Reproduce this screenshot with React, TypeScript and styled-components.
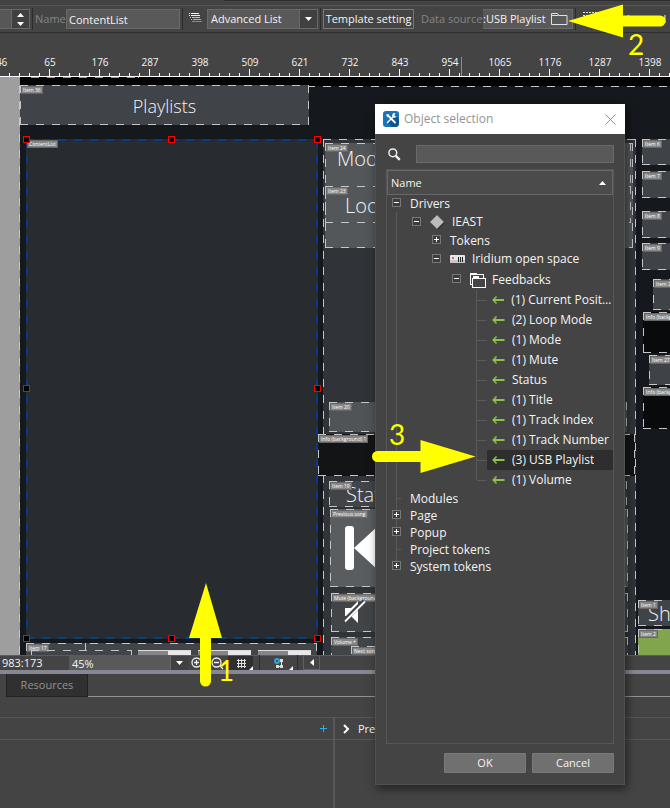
import React from 'react';
import styled, { createGlobalStyle, css } from 'styled-components';

const GlobalStyle = createGlobalStyle`
  * { box-sizing: border-box; }
  html, body { margin: 0; background: #444; }
  body, button, input, select {
    font-family: 'Open Sans', 'Noto Sans', sans-serif;
    font-size: 11px;
    line-height: 16px;
    color: #f4f4f4;
  }
  button, input, select { margin: 0; padding: 0; border: 0; border-radius: 0; outline: 0; background: none; }
  ul { list-style: none; margin: 0; padding: 0; }
`;

const Screen = styled.div`
  position: relative;
  display: flex;
  flex-direction: column;
  min-height: 100vh;
  overflow: hidden;
  background: #444;
`;

/* ---------- toolbar ---------- */

const TopEdge = styled.div`
  height: 5px;
  background: linear-gradient(#2c2c2c, #2c2c2c) 224px 0 / 100% 1px no-repeat #434343;
`;

const Toolbar = styled.header`
  display: flex;
  align-items: center;
  height: 28px;
  border-top: 1px solid #555;
  border-bottom: 1px solid #2e2e2e;
  white-space: nowrap;
  overflow: hidden;
`;

const Divider = styled.span`
  flex: none;
  width: 1px;
  height: 22px;
  margin: 0 2px;
  background: #2c2c2c;
`;

const Spinner = styled.div`
  flex: none;
  display: flex;
  width: 30px;
  height: 20px;
  border: 1px solid #696969;
  border-left: 0;
  background: #575757;
`;

const SpinButtons = styled.div`
  display: flex;
  flex-direction: column;
  margin-left: auto;
  width: 18px;
  background: #404040;
  border-left: 1px solid #696969;
`;

const SpinButton = styled.button`
  flex: 1;
  display: flex;
  align-items: center;
  justify-content: center;
`;

const FieldLabel = styled.label<{ $w: number }>`
  flex: none;
  width: ${p => p.$w}px;
  color: #858585;
`;

const Field = styled.input`
  flex: none;
  height: 20px;
  width: 114px;
  padding: 0 2px;
  border: 1px solid #696969;
  background: #595959;
`;

const Combo = styled.div<{ $width: number; $flat?: boolean }>`
  flex: none;
  position: relative;
  display: flex;
  width: ${p => p.$width}px;
  height: ${p => (p.$flat ? 14 : 20)}px;
  border: ${p => (p.$flat ? 0 : '1px solid #696969')};
  background: #595959;
`;

const ComboSelect = styled.select`
  appearance: none;
  flex: 1;
  min-width: 0;
  padding-left: 3px;
`;

const ComboArrow = styled.span`
  display: flex;
  align-items: center;
  justify-content: center;
  width: 18px;
  border-left: 1px solid #696969;
  background: #404040;
  pointer-events: none;
`;

const OutlineButton = styled.button`
  flex: none;
  height: 20px;
  width: 91px;
  border: 1px solid #777;
`;

const SourceField = styled.div`
  flex: none;
  display: flex;
  align-items: center;
  width: 90px;
  height: 20px;
  border: 1px solid #696969;
  border-left: 0;
  background: #595959;
`;

const SourceInput = styled.input`
  flex: 1;
  min-width: 0;
`;

const IconButton = styled.button<{ $w: number }>`
  flex: none;
  display: flex;
  align-items: center;
  justify-content: center;
  width: ${p => p.$w}px;
  height: 100%;
`;

const ToolGap = styled.span<{ $w: number }>`
  flex: none;
  width: ${p => p.$w}px;
`;

/* ---------- ruler ---------- */

const Ruler = styled.div`
  position: relative;
  flex: none;
  display: flex;
  height: 44px;
  overflow: hidden;
  border-bottom: 1px solid #fff;
  background: linear-gradient(90deg, #fff 1px, transparent 1px) 9px 100% / 10px 3px repeat-x;
`;

const RulerCell = styled.div<{ $first?: boolean }>`
  flex: none;
  width: 50px;
  height: 43px;
  padding-top: 21px;
  margin-left: ${p => (p.$first ? '-25px' : '0')};
  text-align: center;
  font-size: 10px;
  background: linear-gradient(#fff, #fff) 24px 100% / 1px 7px no-repeat;
`;

const RulerCursor = styled.span`
  position: absolute;
  left: 461px;
  bottom: 0;
  width: 1px;
  height: 19px;
  background: #00f000;
`;

/* ---------- canvas ---------- */

const dashes = (c: string, w: number) => css`
  background-image:
    repeating-linear-gradient(90deg, ${c} 0 8px, transparent 8px 16px),
    repeating-linear-gradient(90deg, ${c} 0 8px, transparent 8px 16px),
    repeating-linear-gradient(${c} 0 8px, transparent 8px 16px),
    repeating-linear-gradient(${c} 0 8px, transparent 8px 16px);
  background-size: 100% ${w}px, 100% ${w}px, ${w}px 100%, ${w}px 100%;
  background-position: 0 0, 0 100%, 0 0, 100% 0;
  background-repeat: no-repeat;
`;

const Canvas = styled.main`
  position: relative;
  flex: 1 0 578px;
  overflow: hidden;
  background: linear-gradient(90deg, #9e9e9e 20px, transparent 20px),
    linear-gradient(#030304 9px, #15181c 9px);
`;

const Item = styled.div<{ $x: number; $y: number; $w: number; $h: number; $bg?: string; $line?: string; $weight?: number }>`
  position: absolute;
  left: ${p => p.$x}px;
  top: ${p => p.$y}px;
  width: ${p => p.$w}px;
  height: ${p => p.$h}px;
  background-color: ${p => p.$bg ?? 'transparent'};
  ${p => dashes(p.$line ?? '#c4c6c8', p.$weight ?? 1)}
`;

const Tag = styled.span`
  position: absolute;
  left: 1px;
  top: 1px;
  padding: 0 1px;
  border: 1px solid #666;
  background: #858585;
  color: #fff;
  font-size: 5px;
  line-height: 6px;
  white-space: nowrap;
`;

const Caption = styled.div<{ $left?: number; $top: number }>`
  padding-left: ${p => p.$left ?? 0}px;
  padding-top: ${p => p.$top}px;
  text-align: ${p => (p.$left ? 'left' : 'center')};
  font-size: ${p => (p.$left ? 20 : 18)}px;
  font-weight: 300;
  line-height: 26px;
  white-space: nowrap;
`;

const Handle = styled.span<{ $x: string; $y: string }>`
  position: absolute;
  left: ${p => p.$x};
  top: ${p => p.$y};
  width: 7px;
  height: 7px;
  margin: -4px 0 0 -4px;
  border: 1px solid #f00;
  background: #000;
`;

const Art = styled.svg`
  position: absolute;
  left: 0;
  top: 0;
  overflow: visible;
`;

const Thumb = styled.div<{ $x: number }>`
  position: absolute;
  left: ${p => p.$x}px;
  top: 7px;
  width: 53px;
  height: 6px;
  border-top: 1px solid #ddd;
  background: linear-gradient(90deg, #858585 30px, #e8e8e8 30px);
`;

/* ---------- status bar and bottom panel ---------- */

const StatusBar = styled.div`
  flex: none;
  display: flex;
  align-items: center;
  height: 15px;
  border-top: 1px solid #5c5c5c;
`;

const Coords = styled.span`
  width: 69px;
  padding-left: 2px;
  line-height: 14px;
`;

const StatusButton = styled.button<{ $w: number; $dark?: boolean }>`
  flex: none;
  display: flex;
  align-items: center;
  justify-content: center;
  width: ${p => p.$w}px;
  height: 14px;
  background: ${p => (p.$dark ? '#2f2f2f' : 'transparent')};
`;

const ScrollLeft = styled(StatusButton)`
  margin-left: 3px;
  border: 1px solid #606060;
  border-top: 0;
`;

const Splitter = styled.div`
  flex: none;
  height: 4px;
  background: #858890;
`;

const Tabs = styled.nav`
  flex: none;
  display: flex;
  height: 23px;
`;

const TabGap = styled.span<{ $grow?: boolean }>`
  width: 6px;
  flex: ${p => (p.$grow ? 1 : 'none')};
  border-bottom: ${p => (p.$grow ? '1px solid #929292' : '0')};
`;

const Tab = styled.button`
  width: 82px;
  border: 1px solid #222;
  border-top: 0;
  background: #303030;
  color: #929292;
`;

const PanelGrid = styled.section`
  flex: none;
  display: grid;
  grid-template-columns: 1fr 1fr;
  height: 111px;
  padding-top: 20px;
`;

const Panel = styled.div<{ $left?: boolean }>`
  border-right: ${p => (p.$left ? '2px solid #585858' : '0')};
`;

const PanelHead = styled.div<{ $end?: boolean }>`
  display: flex;
  align-items: center;
  justify-content: ${p => (p.$end ? 'flex-end' : 'flex-start')};
  gap: 8px;
  height: 23px;
  padding: 0 5px 0 7px;
  border-top: 1px solid #575757;
  border-bottom: 1px solid #575757;
`;

/* ---------- dialog ---------- */

const Dialog = styled.section`
  position: absolute;
  left: 375px;
  top: 104px;
  width: 250px;
  border: 1px solid #505050;
  border-top: 0;
  background: #444;
  box-shadow: 2px 4px 9px rgba(0, 0, 0, 0.5);
`;

const TitleBar = styled.header`
  display: flex;
  align-items: center;
  gap: 5px;
  height: 30px;
  margin: 0 -1px;
  padding: 0 8px;
  background: #fff;
`;

const Title = styled.h1`
  flex: 1;
  margin: 0;
  color: #939393;
  font-size: 12px;
  font-weight: 400;
`;

const SearchRow = styled.label`
  display: flex;
  align-items: center;
  justify-content: space-between;
  margin: 11px 10px 6px 12px;
`;

const SearchInput = styled.input`
  width: 198px;
  height: 18px;
  border: 1px solid #6a6a6a;
  background: #595959;
`;

const TreeFrame = styled.div`
  margin: 0 10px;
  height: 575px;
  border: 1px solid #565656;
`;

const TreeHead = styled.button`
  display: flex;
  align-items: center;
  justify-content: space-between;
  width: 100%;
  height: 25px;
  padding: 0 6px 0 3px;
  border: 1px solid #666;
  background: #4b4b4b;
`;

const Tree = styled.ul`
  font-size: 12px;
  background: linear-gradient(#5a5a5a, #5a5a5a) 9px 17px / 1px 352px no-repeat;
`;

const Row = styled.li<{ $level: number; $h: number }>`
  display: flex;
  align-items: center;
  height: ${p => p.$h}px;
  padding-left: ${p => 5 + p.$level * 20}px;
  white-space: nowrap;
`;

const Toggle = styled.button`
  flex: none;
  display: flex;
  align-items: center;
  justify-content: center;
  width: 9px;
  height: 9px;
  margin-top: -2px;
  margin-right: 9px;
  border: 1px solid #777;
  background: #3c3c3c;
`;

const Branch = styled.span`
  flex: none;
  width: 5px;
  height: 1px;
  margin: 0 9px 0 4px;
  background: #5a5a5a;
`;

const RowIcon = styled.span`
  flex: none;
  display: flex;
  width: 22px;
`;

const Leaf = styled.li`
  display: flex;
  height: 20px;
  margin-left: 89px;
  border-left: 1px solid #5a5a5a;
  &:last-child {
    border-color: transparent;
    background: linear-gradient(#5a5a5a, #5a5a5a) 0 0 / 1px 10px no-repeat border-box;
    background-origin: border-box;
  }
`;

const LeafTick = styled.span`
  align-self: center;
  width: 10px;
  height: 1px;
  background: #5a5a5a;
`;

const LeafBody = styled.button<{ $selected?: boolean }>`
  flex: 1;
  display: flex;
  align-items: center;
  gap: 7px;
  min-width: 0;
  padding-left: 5px;
  font-size: 12px;
  text-align: left;
  white-space: nowrap;
  background: ${p => (p.$selected ? '#2e2e2e' : 'transparent')};
`;

const LeafText = styled.span`
  overflow: hidden;
  text-overflow: ellipsis;
`;

const Actions = styled.footer`
  display: flex;
  justify-content: flex-end;
  gap: 6px;
  padding: 9px 10px 11px;
`;

const Action = styled.button`
  width: 82px;
  height: 20px;
  border: 1px solid #7a7a7a;
  border-radius: 1px;
  background: #707070;
`;

/* ---------- annotations ---------- */

const Callouts = styled.div`
  position: absolute;
  inset: 0;
  pointer-events: none;
`;

const CalloutNumber = styled.span<{ $x: number; $y: number }>`
  position: absolute;
  left: ${p => p.$x}px;
  top: ${p => p.$y}px;
  color: #ff0;
  font-family: Lato, sans-serif;
  font-size: 28px;
  line-height: 28px;
`;

/* ---------- icons ---------- */

const Down = () => <svg width="7" height="4"><path d="M0 0h7L3.5 4z" fill="#fff" /></svg>;
const Up = () => <svg width="7" height="4"><path d="M0 4h7L3.5 0z" fill="#fff" /></svg>;

const ListIcon = () => (
  <svg width="22" height="20" shapeRendering="crispEdges">
    <path d="M4 4.5h1M6 4.5h8" stroke="#fff" /><path d="M4 6.5h1M6 6.5h9" stroke="#eee" />
    <path d="M5 8.5h1M7 8.5h8" stroke="#bbb" /><path d="M6 10.5h1M8 10.5h8" stroke="#aaa" />
    <path d="M7 12.500h10" stroke="#888" />
  </svg>
);

const FolderIcon = () => (
  <svg width="17" height="14" fill="none" stroke="#e2e2e2">
    <path d="M.5 12.500V1.500h6l1.500 2h8v9zM.5 3.500h7" />
  </svg>
);

const GridDots = () => (
  <svg width="16" height="17" stroke="#ddd" strokeDasharray="2 1">
    <path d="M0 1.500h16M0 4.500h16M0 7.500h16M0 10.500h16M0 13.500h16" />
  </svg>
);

const ZoomIcon = ({ plus }: { plus?: boolean }) => (
  <svg width="13" height="13" fill="none" stroke="#eee" strokeWidth="1.300">
    <circle cx="5.500" cy="5.500" r="4.500" /><path d="M3 5.500h5M9 9l3 3" />{plus && <path d="M5.500 3v5" />}
  </svg>
);

const AppIcon = () => (
  <svg width="16" height="16">
    <rect width="16" height="16" rx="3" fill="#1a73b9" />
    <path d="M5 11l7-7 4 4v5l-3 3H9z" fill="#125389" />
    <path d="M5 4.500l7 7" stroke="#fff" strokeWidth="1.800" strokeLinecap="round" />
    <path d="M11 5L4.500 11.500" stroke="#fff" strokeWidth="1.500" strokeLinecap="round" />
    <path d="M3.500 3l2.500.5-.5 2.500-2-.8z" fill="#fff" />
    <path d="M12.500 2.500a2.200 2.200 0 1 0 1 2.500l-1.500.2-.8-1z" fill="#fff" />
  </svg>
);

const SearchIcon = () => (
  <svg width="13" height="13" fill="none" stroke="#eee">
    <circle cx="4.800" cy="4.800" r="3.900" strokeWidth="1.500" /><path d="M7.800 7.800l4 4" strokeWidth="2.400" />
  </svg>
);

const DiamondIcon = () => (
  <svg width="15" height="15"><path d="M8 1.500l6.500 6.500L8 14.500 1.500 8z" fill="#222" /><path d="M7 .5l6.500 6.500L7 13.500.5 7z" fill="#bdbdbd" stroke="#d5d5d5" strokeWidth=".6" /></svg>
);

const DeviceIcon = () => (
  <svg width="16" height="9">
    <rect width="15" height="8" rx="1" fill="#e6e6e6" /><rect y="5" width="15" height="3" fill="#c8c8c8" />
    <circle cx="3" cy="3" r="1" fill="#e33" /><path d="M8.500 2v5M10.500 2v5M12.500 2v5" stroke="#222" />
  </svg>
);

const FoldersIcon = () => (
  <svg width="17" height="16" fill="#444" stroke="#fff" shapeRendering="crispEdges">
    <path d="M.5 12.500V2.500h13v10z" /><path d="M0 1.500h7" strokeWidth="2" />
    <path d="M2.500 15.500V6.500h13v9z" /><path d="M3 5h6" strokeWidth="2" />
  </svg>
);

const GreenArrow = () => (
  <svg width="13" height="9" fill="none" stroke="#8bc34a">
    <path d="M1.500 4H12.500" strokeWidth="2" /><path d="M4.500.5L1.200 4l3.300 3.500" strokeWidth="1.500" />
  </svg>
);

/* ---------- data ---------- */

const rulerMarks = ['-46', '65', '176', '287', '398', '509', '621', '732', '843', '954', '1065', '1176', '1287', '1398'];

const feedbacks = ['(1) Current Position', '(2) Loop Mode', '(1) Mode', '(1) Mute', 'Status', '(1) Title', '(1) Track Index', '(1) Track Number', '(3) USB Playlist', '(1) Volume'];

const sideItems = [
  { name: 'Item 6', x: 642, y: 62, h: 26, bg: '#3f4246' },
  { name: 'Item 7', x: 642, y: 94, h: 27, bg: '#3f4246' },
  { name: 'Item 8', x: 642, y: 134, h: 27, bg: '#3f4246' },
  { name: 'Item 9', x: 642, y: 166, h: 27, bg: '#3f4246' },
  { name: 'Item 28', x: 653, y: 202, h: 31, bg: '#3f4246' },
  { name: 'Info (background) 2', x: 643, y: 235, h: 41, bg: '#090a0b' },
  { name: 'Item 27', x: 649, y: 278, h: 30, bg: '#3f4246' },
  { name: 'Info (background) 3', x: 643, y: 310, h: 42, bg: '#090a0b' },
];

const handles: [string, string][] = [
  ['1px', '1px'], ['50%', '1px'], ['100%', '1px'],
  ['1px', '50%'], ['100%', '50%'],
  ['1px', '100%'], ['50%', '100%'], ['100%', '100%'],
];

const Expander = ({ open, name }: { open?: boolean; name: string }) => (
  <Toggle aria-label={`${open ? 'Collapse' : 'Expand'} ${name}`}>
    <svg width="5" height="5" stroke="#fff"><path d="M0 2.500h5" />{!open && <path d="M2.500 0v5" />}</svg>
  </Toggle>
);

const Workspace = () => (
  <Canvas>
    <Item $x={31} $y={0} $w={108} $h={1} $line="#999" />
    <Item $x={19} $y={9} $w={1200} $h={700} />
    <Item $x={20} $y={8} $w={289} $h={40} $bg="#404347">
      <Tag>Item 36</Tag>
      <Caption $top={8}>Playlists</Caption>
    </Item>
    <Item $x={323} $y={62} $w={313} $h={640} $bg="#303338" />
    <Item $x={325} $y={66} $w={308} $h={105} $bg="#53575a" />
    <Item $x={325} $y={66} $w={306} $h={44}>
      <Tag>Item 24</Tag>
      <Caption $left={12} $top={3}>Mode</Caption>
    </Item>
    <Item $x={325} $y={109} $w={306} $h={37}>
      <Tag>Item 23</Tag>
      <Caption $left={20} $top={7}>Loop</Caption>
    </Item>
    <Item $x={329} $y={325} $w={298} $h={30} $bg="#505457"><Tag>Item 20</Tag></Item>
    <Item $x={318} $y={357} $w={317} $h={42} $bg="#131415"><Tag>Info (background) 1</Tag></Item>
    <Item $x={329} $y={404} $w={298} $h={26} $bg="#414548">
      <Tag>Item 19</Tag>
      <Caption $left={17} $top={1}>Status</Caption>
    </Item>
    <Item $x={330} $y={432} $w={298} $h={78} $bg="#595d60">
      <Tag>Previous song</Tag>
      <Art width="60" height="78" fill="#fff">
        <rect x="15" y="17" width="9" height="44" rx="3" /><path d="M24 39l36-33v66z" />
      </Art>
    </Item>
    <Item $x={331} $y={516} $w={297} $h={39} $bg="#414548">
      <Tag>Mute (background)</Tag>
      <Art width="44" height="39" fill="#fff">
        <path d="M14 15h6l7-7v22l-7-7h-6z" /><path d="M13 28L33 8" stroke="#414548" strokeWidth="4" /><path d="M14 28.500L34 8.500" stroke="#fff" strokeWidth="1.800" />
      </Art>
    </Item>
    <Item $x={331} $y={560} $w={297} $h={60} $bg="#414548"><Tag>Volume +</Tag></Item>
    <Item $x={351} $y={569} $w={240} $h={40}><Tag>Next song</Tag></Item>
    {sideItems.map(i => (
      <Item key={i.name} $x={i.x} $y={i.y} $w={180} $h={i.h} $bg={i.bg}><Tag>{i.name}</Tag></Item>
    ))}
    <Item $x={638} $y={523} $w={180} $h={26} $bg="#404347">
      <Tag>Item 1</Tag>
      <Caption $left={10} $top={1}>Show</Caption>
    </Item>
    <Item $x={638} $y={552} $w={180} $h={60} $bg="#80a54d"><Tag>Item 2</Tag></Item>
    <Item $x={26} $y={566} $w={291} $h={60} $bg="#414549">
      <Tag>Item 17</Tag>
      <Item $x={5} $y={7} $w={101} $h={30} />
      <Item $x={59} $y={0} $w={1} $h={8} />
      <Thumb $x={112} /><Thumb $x={172} /><Thumb $x={232} />
    </Item>
    <Item $x={26} $y={62} $w={292} $h={500} $bg="#282b30" $line="#033f85" $weight={2}>
      <Tag>ContentList</Tag>
      {handles.map(([x, y]) => <Handle key={x + y} $x={x} $y={y} />)}
    </Item>
  </Canvas>
);

const ObjectSelection = () => (
  <Dialog role="dialog" aria-labelledby="dialog-title">
    <TitleBar>
      <AppIcon />
      <Title id="dialog-title">Object selection</Title>
      <IconButton $w={14} aria-label="Close">
        <svg width="11" height="11" stroke="#929292"><path d="M.5.5l10 10M10.500.5l-10 10" /></svg>
      </IconButton>
    </TitleBar>
    <SearchRow>
      <SearchIcon />
      <SearchInput type="search" aria-label="Search" />
    </SearchRow>
    <TreeFrame>
      <TreeHead>Name<Up /></TreeHead>
      <Tree>
        <Row $level={0} $h={17}><Expander open name="Drivers" />Drivers</Row>
        <Row $level={1} $h={20}><Expander open name="IEAST" /><RowIcon><DiamondIcon /></RowIcon>IEAST</Row>
        <Row $level={2} $h={17}><Expander name="Tokens" />Tokens</Row>
        <Row $level={2} $h={20}><Expander open name="Iridium open space" /><RowIcon><DeviceIcon /></RowIcon>Iridium open space</Row>
        <Row $level={3} $h={21}><Expander open name="Feedbacks" /><RowIcon><FoldersIcon /></RowIcon>Feedbacks</Row>
        <li>
          <ul>
            {feedbacks.map((f, i) => (
              <Leaf key={f}>
                <LeafTick />
                <LeafBody $selected={i === 8}><GreenArrow /><LeafText>{f}</LeafText></LeafBody>
              </Leaf>
            ))}
          </ul>
        </li>
        <Row $level={0} $h={17}><Branch />Modules</Row>
        <Row $level={0} $h={17}><Expander name="Page" />Page</Row>
        <Row $level={0} $h={17}><Expander name="Popup" />Popup</Row>
        <Row $level={0} $h={17}><Branch />Project tokens</Row>
        <Row $level={0} $h={17}><Expander name="System tokens" />System tokens</Row>
      </Tree>
    </TreeFrame>
    <Actions>
      <Action>OK</Action>
      <Action>Cancel</Action>
    </Actions>
  </Dialog>
);

export default function App() {
  return (
    <>
      <GlobalStyle />
      <Screen>
        <TopEdge />
        <Toolbar>
          <Spinner>
            <SpinButtons>
              <SpinButton aria-label="Increase"><Up /></SpinButton>
              <SpinButton aria-label="Decrease"><Down /></SpinButton>
            </SpinButtons>
          </Spinner>
          <Divider />
          <FieldLabel $w={31} htmlFor="name">Name</FieldLabel>
          <Field id="name" defaultValue="ContentList" />
          <Divider />
          <ListIcon />
          <Combo $width={111}>
            <ComboSelect aria-label="List type"><option>Advanced List</option></ComboSelect>
            <ComboArrow><Down /></ComboArrow>
          </Combo>
          <Divider />
          <OutlineButton>Template setting</OutlineButton>
          <ToolGap $w={7} />
          <FieldLabel $w={62} htmlFor="source">Data source</FieldLabel>
          <SourceField>
            <SourceInput id="source" defaultValue=":USB Playlist" />
            <IconButton $w={26} aria-label="Browse data source"><FolderIcon /></IconButton>
          </SourceField>
          <Divider />
          <ToolGap $w={5} />
          <GridDots />
          <ToolGap $w={17} />
          <span>Advanced</span>
        </Toolbar>
        <Ruler>
          {rulerMarks.map((m, i) => <RulerCell key={m} $first={i === 0}>{m}</RulerCell>)}
          <RulerCursor />
        </Ruler>
        <Workspace />
        <StatusBar>
          <Coords>983:173</Coords>
          <Combo $width={119} $flat>
            <ComboSelect aria-label="Zoom level"><option>45%</option></ComboSelect>
            <ComboArrow><Down /></ComboArrow>
          </Combo>
          <StatusButton $w={18} aria-label="Zoom in"><ZoomIcon plus /></StatusButton>
          <StatusButton $w={22} aria-label="Zoom out"><ZoomIcon /></StatusButton>
          <StatusButton $w={25} $dark aria-label="Grid">
            <svg width="24" height="14"><path d="M9.500 3v9M12.500 3v9M15.500 3v9M8 4.500h9M8 7.500h9M8 10.500h9" stroke="#ddd" /><path d="M24 10v4h-4z" fill="#fff" /></svg>
          </StatusButton>
          <ToolGap $w={4} />
          <Divider />
          <StatusButton $w={33} aria-label="Snapping">
            <svg width="28" height="14"><circle cx="12" cy="5" r="2" fill="none" stroke="#2aa7d8" strokeWidth="2" /><path d="M16.500 4v6M12 10.500h5" stroke="#eee" /><path d="M11 9h3v3h-3zM15 3h3v3h-3zM15 9h3v3h-3z" fill="#ddd" /><path d="M28 10v4h-4z" fill="#fff" /></svg>
          </StatusButton>
          <Divider />
          <ScrollLeft $w={17} aria-label="Scroll left"><svg width="4" height="7"><path d="M4 0v7L0 3.500z" fill="#fff" /></svg></ScrollLeft>
        </StatusBar>
        <Splitter />
        <Tabs>
          <TabGap />
          <Tab>Resources</Tab>
          <TabGap $grow />
        </Tabs>
        <PanelGrid>
          <Panel $left>
            <PanelHead $end>
              <IconButton $w={10} aria-label="Add"><svg width="7" height="7" stroke="#2bb3e8"><path d="M0 3.500h7M3.500 0v7" /></svg></IconButton>
            </PanelHead>
          </Panel>
          <Panel>
            <PanelHead>
              <svg width="8" height="10" fill="none" stroke="#fff" strokeWidth="2"><path d="M2 1l4 4-4 4" /></svg>
              Preview
            </PanelHead>
          </Panel>
        </PanelGrid>
        <ObjectSelection />
        <Callouts>
          <Art width="670" height="808" fill="#ff0">
            <path d="M206 583l16 55h-11v43a5.500 5.500 0 0 1-11 0v-43h-11z" />
            <path d="M568 21l55-16.500V15.500h37a5.500 5.500 0 0 1 0 11h-37v11z" />
            <path d="M475.500 456.500L420.500 440v11H377.500a5.500 5.500 0 0 0 0 11h43v11z" />
          </Art>
          <CalloutNumber $x={218} $y={656}>1</CalloutNumber>
          <CalloutNumber $x={628} $y={30}>2</CalloutNumber>
          <CalloutNumber $x={389} $y={420}>3</CalloutNumber>
        </Callouts>
      </Screen>
    </>
  );
}
